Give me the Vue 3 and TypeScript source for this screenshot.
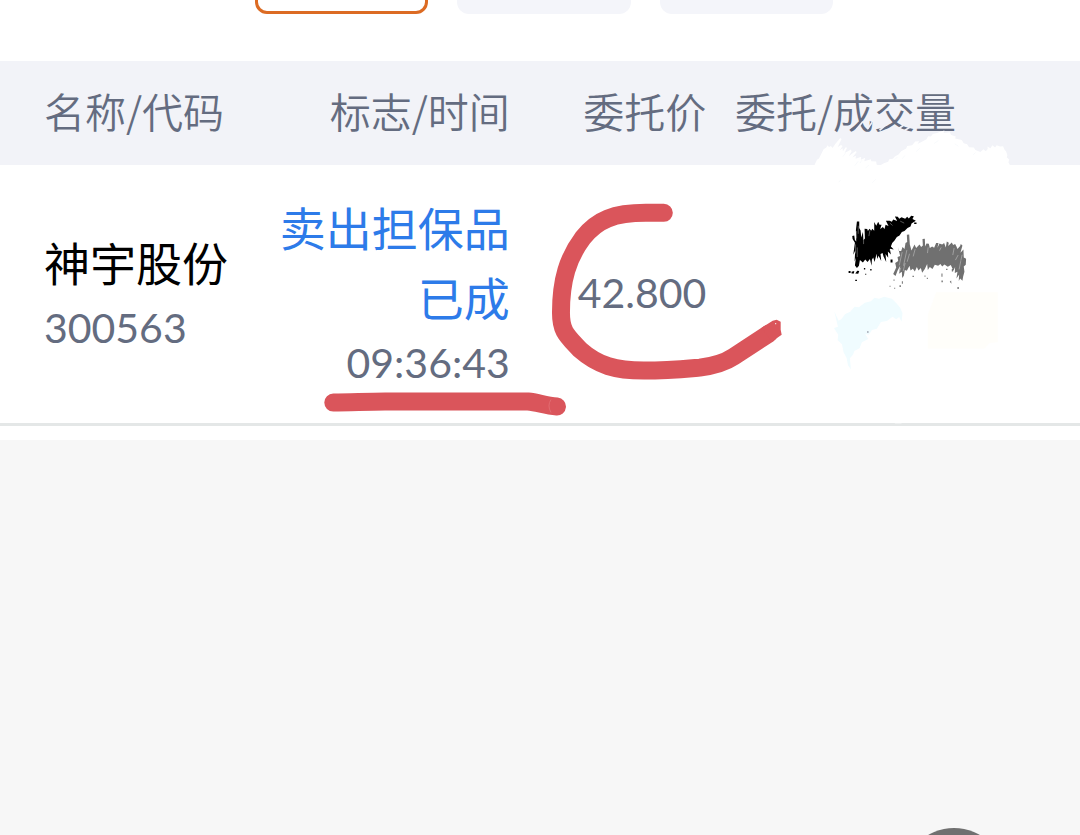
<script setup lang="ts">
interface Order {
  name: string
  code: string
  flags: string[]
  time: string
  price: string
}

const headers: string[] = ['名称/代码', '标志/时间', '委托价', '委托/成交量']

const orders: Order[] = [
  { name: '神宇股份', code: '300563', flags: ['卖出担保品', '已成'], time: '09:36:43', price: '42.800' },
]
</script>

<template>
  <main class="page">
    <section class="panel">
      <nav class="tabs" aria-label="筛选">
        <button type="button" class="tab active" aria-pressed="true"></button>
        <button type="button" class="tab"></button>
        <button type="button" class="tab"></button>
      </nav>

      <div class="orders">
        <table>
          <thead>
            <tr>
              <th v-for="header in headers" :key="header" scope="col">{{ header }}</th>
            </tr>
          </thead>
          <tbody>
            <tr v-for="order in orders" :key="order.code + order.time">
              <td>
                <div class="name">{{ order.name }}</div>
                <div class="figure">{{ order.code }}</div>
              </td>
              <td>
                <div v-for="flag in order.flags" :key="flag" class="flag">{{ flag }}</div>
                <div class="figure">{{ order.time }}</div>
              </td>
              <td><div class="figure price">{{ order.price }}</div></td>
              <td></td>
            </tr>
          </tbody>
        </table>

        <svg class="marks" viewBox="0 61 1080 379" aria-hidden="true">
          <g transform="translate(800 120) scale(0.33333)">
            <path fill="#fff" d="M45 135 52 120 58 116 72 88 80 83 84 76 88 81 94 78 99 84 107 72 122 54 126 57 114 82 124 75 129 78 120 92 129 85 130 94 139 81 142 84 135 99 149 92 154 89 156 95 147 109 160 99 169 93 171 97 158 113 169 108 168 117 185 111 184 120 197 114 194 124 214 118 215 124 230 125 231 134 240 138 253 130 266 126 269 118 280 117 286 110 297 104 305 94 320 86 323 78 338 76 347 65 359 64 354 72 370 64 381 58 386 49 394 50 400 42 413 39 424 35 435 32 432 39 451 37 455 45 469 50 467 56 487 60 493 70 503 73 509 82 523 83 528 90 543 96 552 88 559 94 565 87 564 80 573 85 579 76 587 83 592 76 602 80 611 79 616 90 620 94 624 106 622 112 630 120 627 127 632 136 632 150 45 150Z" />
            <path class="erased-strokes" d="M145 30 170 1M171 28 190 5M203 28 218 7M240 31 260 14M290 31 325 7M310 35 333 21M158 10 167 5M222 21 230 12" />
            <path class="residue" d="M130 110 138 99M166 137 176 124M181 130 187 121M198 145 207 136M218 189 229 178M118 187 123 180M286 119 293 112M308 117 316 107M350 95 361 85M404 71 417 62M466 72 477 79M521 105 528 98" />
          </g>
          <g transform="translate(820 280) scale(0.33333)">
            <path fill="#f0fcff" d="M44 95 57 123 65 119 77 103 92 96 105 81 118 83 136 69 154 65 165 54 178 57 194 51 217 57 230 70 242 84 249 101 246 126 239 112 230 119 219 111 202 124 184 127 172 147 157 151 148 165 137 163 146 178 127 188 120 206 104 214 101 224 91 236 94 270 85 256 81 235 72 218 67 194 54 181 56 165 43 145 55 141Z" />
            <path fill="#fffefa" d="M350 38H535V188L510 190 496 207H325V105Z" />
            <circle cx="145" cy="157" r="2" fill="#667" />
            <path stroke="#fff" stroke-width="3" fill="none" d="M186 429H194M226 430H246" />
          </g>
          <g transform="translate(820 200) scale(0.33333)">
            <path class="ink" d="M98 109 104 107 106 121 110 125 109 91 112 65 119 65 119 85 123 92 125 113 130 97 132 121 136 116 135 87 143 88 145 94 150 87 155 93 158 87 164 93 164 67 170 78 176 66 180 75 186 75 182 88 190 82 195 88 198 75 207 79 199 63 210 63 217 66 221 59 233 64 226 50 235 51 239 57 246 52 257 57 263 51 268 56 275 48 283 49 279 58 289 63 276 71 273 80 264 85 255 94 247 97 240 107 232 112 225 122 218 130 214 140 223 149 211 147 214 164 205 155 206 174 198 163 200 187 192 170 189 160 183 163 185 184 177 168 173 178 171 162 165 187 161 173 157 180 156 198 151 178 144 187 137 179 130 188 121 181 118 198 112 205 106 197 109 174 105 185 107 152 101 165 106 129 99 118Z" />
            <path class="ink-lines" d="M111 94V116M116 78V102M132 101V133M108 134V161M113 143V172M151 92 148 109M211 70 219 77M242 64 254 70M209 150 220 159M199 174 207 185" />
            <path class="ink" d="M87 214H93V220H87ZM96 216 104 214 103 221H96ZM107 221 113 213 119 214 116 222ZM107 240H112V244H107ZM133 205H137V209H133ZM137 222H140V225H137ZM152 208H156V212H152ZM284 68H291V73H284ZM213 179H219V188H213Z" />
            <path class="pencil" d="M235 142 239 154 245 154 249 142 255 148 258 130 263 127 262 105 269 104 271 134 276 152 285 134 290 145 300 134 305 142 310 137 309 118 316 117 317 140 321 131 328 132 331 145 338 140 344 144 350 130 357 130 354 144 360 131 368 134 374 130 379 143 382 125 388 129 386 139 397 128 401 136 407 133 411 140 414 148 422 139 424 133 429 137 423 159 432 149 433 173 440 177 439 195 433 200 435 216 431 231 429 243 422 236 418 244 419 224 411 236 414 216 406 220 407 202 402 213 394 196 385 201 375 194 368 200 363 193 356 198 346 195 339 208 331 202 325 211 323 193 316 208 308 219 304 205 297 212 292 202 286 215 280 207 273 212 270 198 262 213 256 211 253 228 248 235 247 216 238 222 242 198 234 213 228 229 221 223 230 203 227 190 236 184 234 172 242 169Z" />
            <path class="pencil-lines" d="M248 157 239 197M262 151 252 198M270 162 263 186M287 148 281 170M326 143 324 160M365 143 360 153M404 145 400 166M416 166 408 181M424 184 419 209M428 165 424 183M244 204 238 222M257 190 251 214" />
            <path class="pencil" d="M279 228H283V232H279ZM315 227H318V231H315ZM322 234H325V238H322ZM366 242H370V248H366ZM366 221H369V231H366ZM391 246 395 242 396 252ZM414 262H418V268H414ZM240 257H244V262H240ZM210 258H213V261H210ZM224 264H227V267H224ZM247 245H250V252H247ZM397 208H401V215H397ZM380 207H384V211H380ZM222 239H225V243H222Z" />
          </g>
          <path class="marker" d="M664 213H646C614 213 597 220 583 238C568 258 561 280 561 313C561 332 567 336 580 350C598 366 616 371 644 371C668 371 688 369 700 368C716 366 725 363 734 357L769 334" />
          <path class="marker-tip" d="M762 328 773 321 777 320 781 322V330L782 335 772 342Z" />
          <path class="marker" d="M333 403C351 403 366 402 385 402H528C538 403 545 406 557 407" />
          <path class="marker-seam" d="M551 400Q547 406 551 413" />
          <circle cx="776" cy="324" r="0.6" fill="#fff" />
        </svg>
      </div>
    </section>

    <button type="button" class="float-button" aria-label="更多"></button>
  </main>
</template>

<style>
body {
  margin: 0;
  background: #f7f7f7;
}
</style>

<style scoped>
.page {
  min-height: 100vh;
  background: #f7f7f7;
  font-family: Lato, "Noto Sans CJK SC", sans-serif;
  color: #646c80;
}

.panel {
  background: #fff;
}

.tabs {
  display: flex;
  justify-content: center;
  gap: 29px;
  height: 61px;
  padding-left: 8px;
  overflow: hidden;
}

.tab {
  box-sizing: border-box;
  width: 16.2%;
  height: 80px;
  margin-top: -66px;
  border: 0;
  border-radius: 12px;
  background: #f4f5fa;
}

.tab.active {
  border: 3px solid #dc6b23;
  background: #fff;
}

.orders {
  position: relative;
  padding-bottom: 14px;
}

table {
  width: 100%;
  table-layout: fixed;
  border-collapse: collapse;
}

th,
td {
  box-sizing: border-box;
  padding: 0;
  text-align: right;
  white-space: nowrap;
}

th {
  width: 18.2%;
  height: 104px;
  padding-bottom: 6px;
  background: #f2f3f8;
  font-family: "Noto Sans CJK SC", sans-serif;
  font-size: 41px;
  font-weight: 350;
  line-height: 60px;
}

th:nth-child(1) {
  width: 25%;
}

th:nth-child(2) {
  width: 22.2%;
}

th:nth-child(4) {
  width: 34.6%;
}

th:first-child,
td:first-child {
  padding-left: 44px;
  text-align: left;
}

th:last-child,
td:last-child {
  padding-right: 124px;
}

td {
  height: 259px;
  padding-bottom: 2px;
  border-bottom: 3px solid #e4e7e7;
  vertical-align: middle;
}

.name,
.flag {
  padding-bottom: 4px;
  font-family: "Noto Sans CJK SC", sans-serif;
  font-size: 46px;
  line-height: 66px;
}

.name {
  color: #000;
}

.flag {
  color: #2d7be9;
}

.figure {
  font-size: 41px;
  line-height: 60px;
}

.marks {
  position: absolute;
  top: 0;
  left: 0;
  width: 100%;
  height: 100%;
  pointer-events: none;
}

.marker {
  fill: none;
  stroke: #da555b;
  stroke-width: 18;
  stroke-linecap: round;
  stroke-linejoin: round;
}

.marker-tip {
  fill: #da555b;
}

.marker-seam {
  fill: none;
  stroke: #e16b70;
  stroke-width: 1;
}

.erased-strokes {
  fill: none;
  stroke: #f2f3f8;
  stroke-width: 5;
}

.residue {
  fill: none;
  stroke: #f5f7fa;
  stroke-width: 2;
}

.ink {
  fill: #000;
}

.ink-lines {
  fill: none;
  stroke: #fff;
  stroke-width: 1;
}

.pencil {
  fill: #707070;
}

.pencil-lines {
  fill: none;
  stroke: #fff;
  stroke-width: 1;
}

.float-button {
  position: fixed;
  right: 74px;
  bottom: -97px;
  width: 104px;
  height: 104px;
  padding: 0;
  border: 0;
  border-radius: 50%;
  background: #707070;
}
</style>
